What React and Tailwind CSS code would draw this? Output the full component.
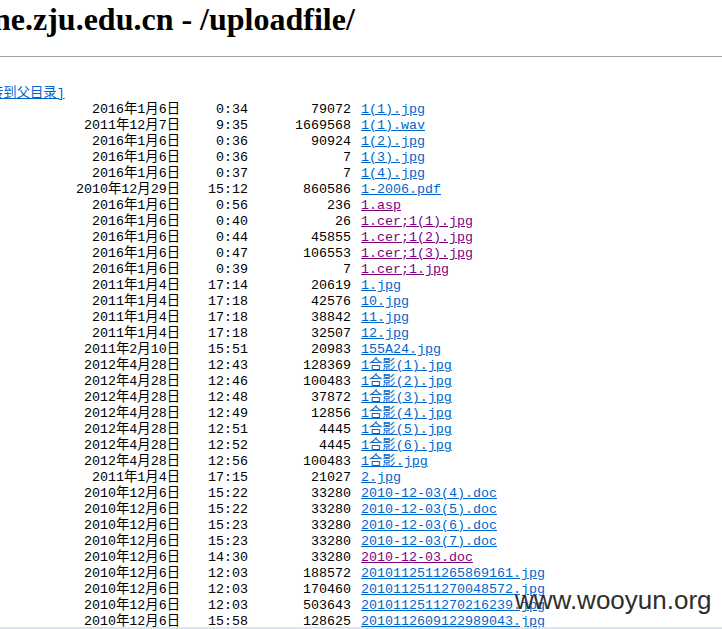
import React from 'react';

// IIS directory listing: date, time, size, name, visited
const files = [
    ['2016年1月6日', '0:34', '79072', '1(1).jpg', false],
    ['2011年12月7日', '9:35', '1669568', '1(1).wav', false],
    ['2016年1月6日', '0:36', '90924', '1(2).jpg', false],
    ['2016年1月6日', '0:36', '7', '1(3).jpg', false],
    ['2016年1月6日', '0:37', '7', '1(4).jpg', false],
    ['2010年12月29日', '15:12', '860586', '1-2006.pdf', false],
    ['2016年1月6日', '0:56', '236', '1.asp', true],
    ['2016年1月6日', '0:40', '26', '1.cer;1(1).jpg', true],
    ['2016年1月6日', '0:44', '45855', '1.cer;1(2).jpg', true],
    ['2016年1月6日', '0:47', '106553', '1.cer;1(3).jpg', true],
    ['2016年1月6日', '0:39', '7', '1.cer;1.jpg', true],
    ['2011年1月4日', '17:14', '20619', '1.jpg', false],
    ['2011年1月4日', '17:18', '42576', '10.jpg', false],
    ['2011年1月4日', '17:18', '38842', '11.jpg', false],
    ['2011年1月4日', '17:18', '32507', '12.jpg', false],
    ['2011年2月10日', '15:51', '20983', '155A24.jpg', false],
    ['2012年4月28日', '12:43', '128369', '1合影(1).jpg', false],
    ['2012年4月28日', '12:46', '100483', '1合影(2).jpg', false],
    ['2012年4月28日', '12:48', '37872', '1合影(3).jpg', false],
    ['2012年4月28日', '12:49', '12856', '1合影(4).jpg', false],
    ['2012年4月28日', '12:51', '4445', '1合影(5).jpg', false],
    ['2012年4月28日', '12:52', '4445', '1合影(6).jpg', false],
    ['2012年4月28日', '12:56', '100483', '1合影.jpg', false],
    ['2011年1月4日', '17:15', '21027', '2.jpg', false],
    ['2010年12月6日', '15:22', '33280', '2010-12-03(4).doc', false],
    ['2010年12月6日', '15:22', '33280', '2010-12-03(5).doc', false],
    ['2010年12月6日', '15:23', '33280', '2010-12-03(6).doc', false],
    ['2010年12月6日', '15:23', '33280', '2010-12-03(7).doc', false],
    ['2010年12月6日', '14:30', '33280', '2010-12-03.doc', true],
    ['2010年12月6日', '12:03', '188572', '2010112511265869161.jpg', false],
    ['2010年12月6日', '12:03', '170460', '2010112511270048572.jpg', false],
    ['2010年12月6日', '12:03', '503643', '2010112511270216239.jpg', false],
    ['2010年12月6日', '15:58', '128625', '2010112609122989043.jpg', false],
];

function App() {
    return (
        <div className="relative w-[722px] h-[629px] overflow-hidden bg-white flex flex-col">
            <div className="flex-1 overflow-hidden">
                <h1 className="ml-[-7px] pt-[3px] h-[56px] text-[32px] leading-8 font-bold text-black whitespace-nowrap font-['Liberation_Serif',serif]">
                    ne.zju.edu.cn - /uploadfile/
                </h1>
                <hr className="border-0 border-t border-[#a0a0a0]" />

                <div className="mt-[29px] text-[13.33px] leading-4 text-black font-['Liberation_Mono','Noto_Sans_CJK_SC',monospace]">
                    <div className="h-4 ml-[-18px] whitespace-nowrap">
                        <a href="#" className="text-[#0066cc] underline">[转到父目录]</a>
                    </div>
                    {files.map(([date, time, size, name, visited], i) => (
                        <div key={i} className="h-4 flex whitespace-nowrap">
                            <span className="w-[180px] text-right">{date}</span>
                            <span className="w-[68px] text-right">{time}</span>
                            <span className="w-[103px] text-right">{size}</span>
                            <a
                                href="#"
                                className={visited ? 'ml-[10px] text-[#800080] underline' : 'ml-[10px] text-[#0066cc] underline'}
                            >
                                {name}
                            </a>
                        </div>
                    ))}
                </div>
            </div>
            <div className="h-[2px] bg-[#dce6f0]" />

            {/* wooyun watermark */}
            <div className="absolute left-[515px] top-[584px] text-[26px] leading-8 text-[#2e2e2e] font-['Liberation_Sans',sans-serif]">
                www.wooyun.org
            </div>
        </div>
    );
}

export default App;
